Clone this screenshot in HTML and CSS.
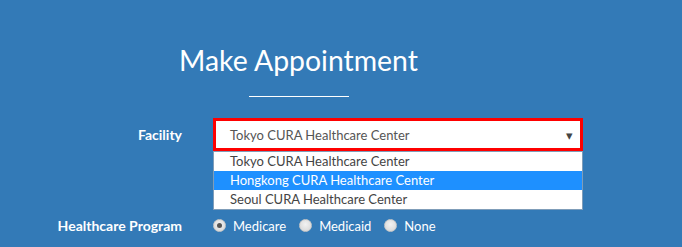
FILE: index.html
```html
<!DOCTYPE html>
<html lang="en">
<head>
<meta charset="utf-8">
<title>Make Appointment</title>
<link rel="stylesheet" href="styles.css">
</head>
<body>
<section class="page">
  <h2 class="title">Make Appointment</h2>
  <hr class="rule">
  <form class="form">
    <div class="row">
      <label class="label">Facility</label>
      <div class="select-wrap">
        <div class="select">
          <span class="select-value">Tokyo CURA Healthcare Center</span>
          <span class="caret">&#9662;</span>
        </div>
        <ul class="dropdown">
          <li class="option">Tokyo CURA Healthcare Center</li>
          <li class="option active">Hongkong CURA Healthcare Center</li>
          <li class="option">Seoul CURA Healthcare Center</li>
        </ul>
      </div>
    </div>
    <div class="row row-program">
      <label class="label">Healthcare Program</label>
      <div class="radios">
        <span class="radio-item"><span class="radio checked"></span>Medicare</span>
        <span class="radio-item"><span class="radio"></span>Medicaid</span>
        <span class="radio-item"><span class="radio"></span>None</span>
      </div>
    </div>
  </form>
</section>
</body>
</html>
```
FILE: styles.css
```css
html, body {
  margin: 0;
  padding: 0;
  background: #337ab7;
  height: 100%;
  overflow: hidden;
}
body {
  font-family: Lato, "Open Sans", sans-serif;
  color: #fff;
}
.page {
  margin-left: 14px;
  width: 569px;
  padding-top: 43px;
}
.title {
  margin: 0;
  font-size: 28.4px;
  line-height: 34px;
  font-weight: 400;
  text-align: center;
  color: #fff;
}
.rule {
  width: 100px;
  height: 0;
  border: 0;
  border-top: 1px solid #fff;
  margin: 19px auto 21px;
}
.form {
  margin: 0;
}
.row {
  display: flex;
  align-items: center;
}
.label {
  width: 168px;
  margin-right: 31px;
  text-align: right;
  font-weight: 700;
  font-size: 14px;
}
.select-wrap {
  position: relative;
  width: 370px;
}
.select {
  box-sizing: border-box;
  height: 33px;
  border: 3px solid #ff0000;
  background: #fff;
  display: flex;
  align-items: center;
  justify-content: space-between;
  padding: 0 7px 0 14px;
  color: #555;
  font-size: 13px;
}
.caret {
  font-size: 13px;
  color: #444;
}
.dropdown {
  position: absolute;
  top: 100%;
  left: 0;
  right: 0;
  margin: 0;
  padding: 0;
  list-style: none;
  background: #fff;
  border: 1px solid #7f9db9;
  box-sizing: border-box;
  z-index: 2;
}
.option {
  height: 19px;
  line-height: 19px;
  padding-left: 16px;
  font-size: 13px;
  color: #444;
}
.option.active {
  background: #1e90ff;
  color: #fff;
}
.row-program {
  margin-top: 66px;
}
.radios {
  display: flex;
  align-items: center;
  font-size: 13px;
}
.radio-item {
  display: inline-flex;
  align-items: center;
  margin-right: 13px;
}
.radio {
  box-sizing: border-box;
  width: 13px;
  height: 13px;
  border-radius: 50%;
  background: radial-gradient(circle at 50% 40%, #f2f2f2, #d4d4d4);
  border: 1px solid #c8c8c8;
  margin-right: 7px;
  position: relative;
}
.radio.checked::after {
  content: "";
  position: absolute;
  left: 3px;
  top: 3px;
  width: 5px;
  height: 5px;
  border-radius: 50%;
  background: #555;
}
```
